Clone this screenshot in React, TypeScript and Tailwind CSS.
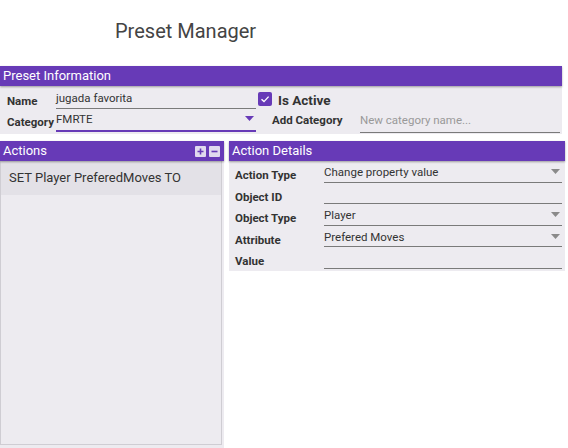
import React from "react";

const Arrow = ({ color = "#8a8a8a" }: { color?: string }) => (
  <svg width="9" height="5" viewBox="0 0 9 5" className="shrink-0">
    <path d="M0 0 H9 L4.5 5 Z" fill={color} />
  </svg>
);

const Header = ({ children, className = "" }: { children: React.ReactNode; className?: string }) => (
  <div
    className={`h-[20px] bg-[#673ab7] text-white text-[13px] leading-[20px] pl-[3px] flex items-center shadow-[0_1px_2px_rgba(0,0,0,0.35)] relative z-10 ${className}`}
  >
    {children}
  </div>
);

const DetailRow = ({ label, value, arrow }: { label: string; value?: string; arrow?: boolean }) => (
  <div className="h-[21.5px] flex">
    <div className="w-[95px] pl-[6px] pt-[7px] text-[11.5px] font-bold text-[#333] leading-[14px]">{label}</div>
    <div className="w-[238px] border-b border-[#7a7a7a] flex items-start justify-between pt-[4px] pr-[2px]">
      <span className="text-[11.5px] text-[#333] leading-[14px]">{value ?? ""}</span>
      {arrow && (
        <span className="pt-[4px]">
          <Arrow />
        </span>
      )}
    </div>
  </div>
);

export default function App() {
  return (
    <div className="w-[568px] h-[448px] bg-white overflow-hidden" style={{ fontFamily: "Roboto, 'Liberation Sans', sans-serif" }}>
      <div className="h-[66px] pl-[115px] pt-[18px] text-[20px] text-[#444] leading-[26px]">Preset Manager</div>

      <div className="w-[562px]">
        <Header>Preset Information</Header>
        <div className="h-[48px] bg-[#edebf0] relative">
          <div className="flex h-[24px]">
            <div className="w-[56px] pl-[7px] pt-[8px] text-[11.5px] font-bold text-[#333] leading-[14px]">Name</div>
            <div className="w-[200px] h-[23px] border-b border-[#7a7a7a] pt-[5px] text-[11.5px] text-[#333] leading-[14px]">
              jugada favorita
            </div>
            <div className="ml-[2px] mt-[6px] w-[14px] h-[14px] rounded-[2px] bg-[#673ab7] flex items-center justify-center">
              <svg width="10" height="10" viewBox="0 0 10 10">
                <path d="M1.5 5.2 L4 7.6 L8.6 2.6" stroke="white" strokeWidth="1.4" fill="none" />
              </svg>
            </div>
            <div className="ml-[6px] pt-[5px] text-[13.5px] font-bold text-[#333] leading-[18px]">Is Active</div>
          </div>
          <div className="flex h-[24px]">
            <div className="w-[56px] pl-[7px] pt-[5px] text-[11.5px] font-bold text-[#333] leading-[14px]">Category</div>
            <div className="w-[200px] h-[22px] border-b-2 border-[#673ab7] flex justify-between items-start pt-[2px] pr-[2px]">
              <span className="text-[11.5px] text-[#333] leading-[14px]">FMRTE</span>
              <span className="pt-[4px]">
                <Arrow color="#673ab7" />
              </span>
            </div>
            <div className="w-[104px] pl-[16px] pt-[3px] text-[11.5px] font-bold text-[#333] leading-[14px]">Add Category</div>
            <div className="w-[200px] h-[23px] border-b border-[#7a7a7a] pt-[3px] text-[11.5px] text-[#999] leading-[14px]">
              New category name...
            </div>
          </div>
        </div>
      </div>

      <div className="flex mt-[7px]">
        <div className="w-[224px] h-[307px] flex flex-col">
          <Header className="justify-between pr-[4px]">
            <span>Actions</span>
            <div className="flex gap-[3px]">
              <div className="w-[11px] h-[11px] bg-[#e0d9ee] rounded-[1px] flex items-center justify-center">
                <svg width="7" height="7" viewBox="0 0 7 7">
                  <path d="M3.5 0.5 V6.5 M0.5 3.5 H6.5" stroke="#673ab7" strokeWidth="1.6" />
                </svg>
              </div>
              <div className="w-[11px] h-[11px] bg-[#e0d9ee] rounded-[1px] flex items-center justify-center">
                <svg width="7" height="7" viewBox="0 0 7 7">
                  <path d="M0.5 3.5 H6.5" stroke="#673ab7" strokeWidth="1.6" />
                </svg>
              </div>
            </div>
          </Header>
          <div className="flex-1 bg-[#edebf0] pr-[2px] pb-[3px]">
            <div className="h-full border border-[#cfcdd3] border-t-0">
              <div className="h-[34px] bg-[#e3e1e7] pl-[8px] flex items-center text-[13px] text-[#333]">
                SET Player PreferedMoves TO
              </div>
            </div>
          </div>
        </div>

        <div className="ml-[5px] w-[336px]">
          <Header>Action Details</Header>
          <div className="bg-[#edebf0] h-[110px]">
            <DetailRow label="Action Type" value="Change property value" arrow />
            <DetailRow label="Object ID" />
            <DetailRow label="Object Type" value="Player" arrow />
            <DetailRow label="Attribute" value="Prefered Moves" arrow />
            <DetailRow label="Value" />
          </div>
        </div>
      </div>
    </div>
  );
}
